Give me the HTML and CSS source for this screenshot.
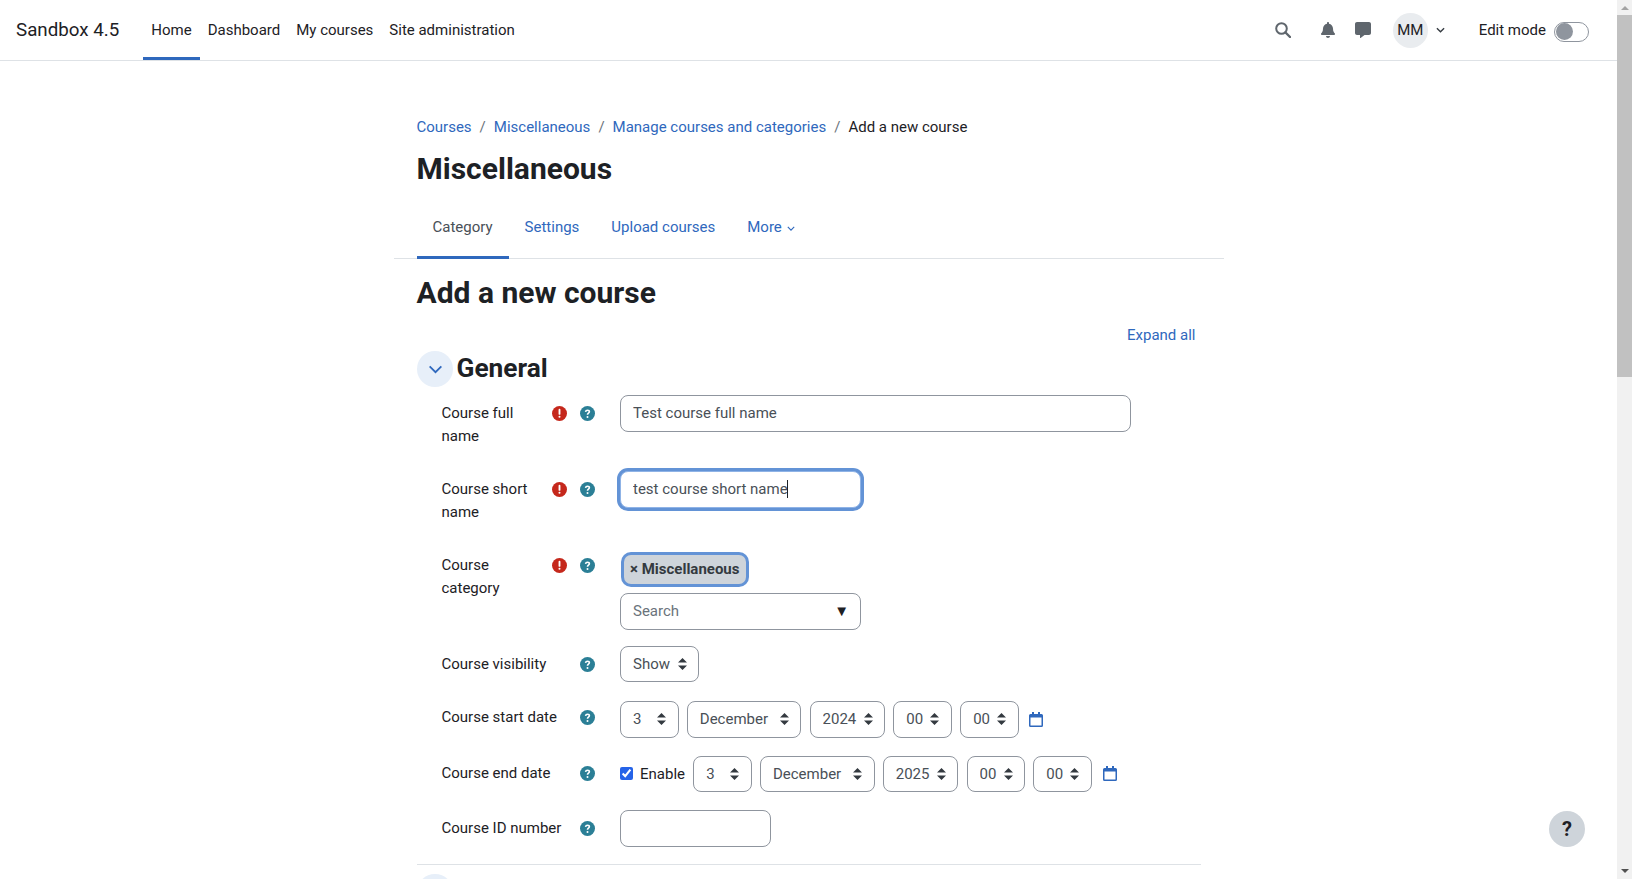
FILE: index.html
```html
<!DOCTYPE html>
<html lang="en">
<head>
    <meta charset="UTF-8">
    <meta name="viewport" content="width=device-width, initial-scale=1.0">
    <title>Add a new course</title>
    <link rel="stylesheet" href="styles.css">
</head>
<body>

    <!-- Shared icons -->
    <svg class="icon-defs" width="0" height="0">
        <symbol id="icon-required" viewBox="0 0 16 16">
            <circle cx="8" cy="8" r="8"/>
            <path d="M8 4v4.400" stroke="#fff" stroke-width="2" stroke-linecap="round"/>
            <circle cx="8" cy="11.500" r="1.100" fill="#fff"/>
        </symbol>
        <symbol id="icon-help" viewBox="0 0 16 16">
            <circle cx="8" cy="8" r="8"/>
            <path d="M5.900 6.300c.2-1.100 1-1.700 2.100-1.700 1.200 0 2 .7 2 1.600 0 1.500-2 1.500-2 3" fill="none" stroke="#fff" stroke-width="1.700"/>
            <circle cx="8" cy="11.700" r="1.050" fill="#fff"/>
        </symbol>
        <symbol id="icon-calendar" viewBox="0 0 14 15">
            <path d="M3 0h2v2h4V0h2v2h1.500A1.500 1.500 0 0 1 14 3.500v10a1.500 1.500 0 0 1-1.500 1.500h-11A1.500 1.500 0 0 1 0 13.500v-10A1.500 1.500 0 0 1 1.500 2H3zM1.500 5.500v8h11v-8z"/>
        </symbol>
    </svg>

    <div class="page">

        <!-- Navbar -->
        <nav class="navbar">
            <a class="brand" href="#">Sandbox 4.5</a>
            <ul class="nav-links">
                <li><a class="active" href="#">Home</a></li>
                <li><a href="#">Dashboard</a></li>
                <li><a href="#">My courses</a></li>
                <li><a href="#">Site administration</a></li>
            </ul>
            <div class="nav-right">
                <svg class="nav-search" viewBox="0 0 16 16" width="16" height="16">
                    <circle cx="6.500" cy="6.500" r="5.300" fill="none" stroke="#5f666d" stroke-width="2"/>
                    <path d="M10.500 10.500l4.500 4.500" stroke="#5f666d" stroke-width="2.400" stroke-linecap="round"/>
                </svg>
                <svg class="nav-bell" viewBox="0 0 448 512" width="14" height="16">
                    <path d="M224 512c35.320 0 63.970-28.650 63.970-64H160.030c0 35.350 28.650 64 63.970 64zm215.390-149.710c-19.320-20.760-55.470-51.990-55.470-154.290 0-77.700-54.480-139.900-127.940-155.160V32c0-17.670-14.320-32-31.980-32s-31.980 14.330-31.980 32v20.840C118.560 68.100 64.080 130.300 64.080 208c0 102.300-36.150 133.530-55.470 154.290-6 6.450-8.660 14.160-8.610 21.710.11 16.400 12.980 32 32.100 32h383.800c19.120 0 32-15.600 32.100-32 .05-7.550-2.610-15.270-8.610-21.710z"/>
                </svg>
                <svg class="nav-message" viewBox="0 0 512 512" width="16" height="16">
                    <path d="M448 0H64C28.700 0 0 28.700 0 64v288c0 35.300 28.700 64 64 64h96v84c0 9.800 11.200 15.500 19.100 9.700L304 416h144c35.300 0 64-28.700 64-64V64c0-35.300-28.700-64-64-64z"/>
                </svg>
                <div class="avatar">MM</div>
                <svg class="nav-caret" viewBox="0 0 10 6" width="9" height="6">
                    <path d="M1 1l4 4 4-4" fill="none" stroke="#343a40" stroke-width="1.500"/>
                </svg>
                <span class="edit-label">Edit mode</span>
                <span class="toggle"><span class="toggle-knob"></span></span>
            </div>
        </nav>

        <!-- Main Content -->
        <div class="main-content">
            <ol class="breadcrumb">
                <li><a href="#">Courses</a></li>
                <li class="sep">/</li>
                <li><a href="#">Miscellaneous</a></li>
                <li class="sep">/</li>
                <li><a href="#">Manage courses and categories</a></li>
                <li class="sep">/</li>
                <li>Add a new course</li>
            </ol>
            <h1>Miscellaneous</h1>

            <ul class="tabs">
                <li><a class="active" href="#">Category</a></li>
                <li><a href="#">Settings</a></li>
                <li><a href="#">Upload courses</a></li>
                <li>
                    <a href="#">More
                        <svg viewBox="0 0 10 6" width="8" height="5"><path d="M1 1l4 4 4-4" fill="none" stroke="currentColor" stroke-width="1.400"/></svg>
                    </a>
                </li>
            </ul>

            <h2>Add a new course</h2>
            <div class="expand-row"><a href="#">Expand all</a></div>

            <div class="section-head">
                <span class="section-toggle">
                    <svg viewBox="0 0 16 10" width="15" height="9"><path d="M1.500 1.500L8 8l6.500-6.500" fill="none" stroke="currentColor" stroke-width="2"/></svg>
                </span>
                <h3>General</h3>
            </div>

            <form class="course-form">
                <div class="form-row">
                    <div class="row-label">
                        <label>Course full name</label>
                        <svg class="icon-required"><use href="#icon-required"/></svg>
                        <svg class="icon-help"><use href="#icon-help"/></svg>
                    </div>
                    <input class="text-input input-full" type="text" value="Test course full name">
                </div>

                <div class="form-row">
                    <div class="row-label">
                        <label>Course short name</label>
                        <svg class="icon-required"><use href="#icon-required"/></svg>
                        <svg class="icon-help"><use href="#icon-help"/></svg>
                    </div>
                    <div class="focus-wrap">
                        <input class="text-input input-short focused" type="text" value="test course short name">
                        <span class="caret"></span>
                    </div>
                </div>

                <div class="form-row">
                    <div class="row-label">
                        <label>Course category</label>
                        <svg class="icon-required"><use href="#icon-required"/></svg>
                        <svg class="icon-help"><use href="#icon-help"/></svg>
                    </div>
                    <div class="category-field">
                        <span class="chip">× Miscellaneous</span>
                        <div class="search-box">
                            <span class="search-placeholder">Search</span>
                            <span class="search-arrow">▼</span>
                        </div>
                    </div>
                </div>

                <div class="form-row">
                    <div class="row-label">
                        <label>Course visibility</label>
                        <svg class="icon-help"><use href="#icon-help"/></svg>
                    </div>
                    <select class="select sel-show"><option>Show</option></select>
                </div>

                <div class="form-row">
                    <div class="row-label">
                        <label>Course start date</label>
                        <svg class="icon-help"><use href="#icon-help"/></svg>
                    </div>
                    <div class="date-group start-date">
                        <select class="select sel-small"><option>3</option></select>
                        <select class="select sel-month"><option>December</option></select>
                        <select class="select sel-year"><option>2024</option></select>
                        <select class="select sel-small"><option>00</option></select>
                        <select class="select sel-small"><option>00</option></select>
                        <svg class="calendar"><use href="#icon-calendar"/></svg>
                    </div>
                </div>

                <div class="form-row">
                    <div class="row-label">
                        <label>Course end date</label>
                        <svg class="icon-help"><use href="#icon-help"/></svg>
                    </div>
                    <div class="date-group end-date">
                        <label class="enable"><input type="checkbox" checked> Enable</label>
                        <select class="select sel-small"><option>3</option></select>
                        <select class="select sel-month"><option>December</option></select>
                        <select class="select sel-year"><option>2025</option></select>
                        <select class="select sel-small"><option>00</option></select>
                        <select class="select sel-small"><option>00</option></select>
                        <svg class="calendar"><use href="#icon-calendar"/></svg>
                    </div>
                </div>

                <div class="form-row">
                    <div class="row-label">
                        <label>Course ID number</label>
                        <svg class="icon-help"><use href="#icon-help"/></svg>
                    </div>
                    <input class="text-input input-id" type="text">
                </div>
            </form>

            <hr class="section-rule">
            <span class="section-toggle"></span>
        </div>

        <button class="help-btn" type="button">?</button>
    </div>

    <!-- Scrollbar -->
    <div class="scrollbar">
        <span class="scroll-up"></span>
        <div class="scroll-thumb"></div>
        <span class="scroll-down"></span>
    </div>

</body>
</html>
```

FILE: styles.css
```css
* {
    box-sizing: border-box;
}
html, body {
    height: 100%;
    overflow: hidden;
}
body {
    margin: 0;
    display: flex;
    font-family: Roboto, "Liberation Sans", sans-serif;
    font-size: 15px;
    line-height: 22.5px;
    color: #1d2125;
    background-color: white;
}
a {
    color: #2f68bd;
    text-decoration: none;
}
ul, ol {
    list-style: none;
    margin: 0;
    padding: 0;
}
.icon-defs {
    display: block;
    height: 0;
}
.page {
    flex-grow: 1;
    min-width: 0;
}

/* Navbar */
.navbar {
    display: flex;
    align-items: stretch;
    height: 61px;
    padding-left: 16px;
    border-bottom: 1px solid #dee2e6;
}
.brand {
    align-self: center;
    width: 127.300px;
    color: #1d2125;
    font-size: 18.75px;
    white-space: nowrap;
}
.nav-links {
    display: flex;
}
.nav-links a {
    display: flex;
    align-items: center;
    height: 60px;
    padding: 3px 8px 0;
    color: #1d2125;
    border-bottom: 3px solid transparent;
}
.nav-links a.active {
    border-bottom-color: #2f68bd;
}
.nav-right {
    display: flex;
    align-items: center;
    margin-left: auto;
    padding-right: 28px;
}
.nav-search {
    margin-right: 30px;
}
.nav-bell {
    margin-right: 20px;
    fill: #5f666d;
}
.nav-message {
    margin-right: 22px;
    fill: #5f666d;
}
.avatar {
    display: flex;
    align-items: center;
    justify-content: center;
    width: 35px;
    height: 35px;
    margin-right: 8px;
    border-radius: 50%;
    background-color: #e9ecef;
}
.nav-caret {
    margin-right: 34px;
}
.edit-label {
    margin-right: 8px;
}
.toggle {
    display: block;
    width: 35px;
    height: 20px;
    margin-top: 3px;
    border: 1px solid #8f959e;
    border-radius: 10px;
}
.toggle-knob {
    display: block;
    width: 17px;
    height: 17px;
    margin: .5px 0 0 .5px;
    border-radius: 50%;
    background-color: #8f959e;
}

/* Main Content */
.main-content {
    width: 830px;
    margin: 0 auto;
}
.breadcrumb {
    display: flex;
    gap: 8px;
    margin: 55px 0 0 23px;
}
.breadcrumb .sep {
    color: #6a737b;
}
h1, h2, h3 {
    margin: 0;
    font-weight: 700;
}
h1 {
    margin: 12px 0 0 23px;
    font-size: 30px;
    line-height: 36px;
}
.tabs {
    display: flex;
    height: 62px;
    margin-top: 10px;
    padding-left: 23px;
    border-bottom: 1px solid #dee2e6;
}
.tabs a {
    display: block;
    height: 62px;
    padding: 19px 16px 0;
}
.tabs a.active {
    color: #495057;
    border-bottom: 3px solid #2f68bd;
}
.tabs svg {
    margin-left: 1px;
    vertical-align: 1px;
}
h2 {
    margin: 16px 0 0 23px;
    font-size: 30px;
    line-height: 36px;
}
.expand-row {
    margin-top: 13px;
    padding-right: 28px;
    text-align: right;
}
.section-head {
    display: flex;
    align-items: center;
    gap: 3.500px;
    margin: 5px 0 8px 23.500px;
}
.section-toggle {
    display: flex;
    align-items: center;
    justify-content: center;
    width: 36px;
    height: 36px;
    padding-top: 1px;
    border-radius: 50%;
    color: #2f68bd;
    background-color: #e7eff9;
}
.main-content > .section-toggle {
    margin: 9px 0 0 23.500px;
}
h3 {
    margin-bottom: 2px;
    font-size: 26.250px;
    line-height: 32px;
}

/* Form */
.form-row {
    display: grid;
    grid-template-columns: 178.500px 1fr;
    align-items: start;
    margin: 0 0 16px 48px;
}
.row-label {
    display: flex;
    align-items: flex-start;
    padding-top: 7px;
    padding-bottom: 8px;
}
.row-label label {
    flex: 1;
    min-width: 0;
    padding-right: 8px;
}
.icon-required,
.icon-help {
    flex: none;
    width: 15px;
    height: 15px;
    margin-top: 4px;
}
.icon-required {
    fill: #c5281c;
    margin-right: 13px;
}
.icon-help {
    fill: #2b7f96;
    margin-right: 25.500px;
}
.text-input {
    display: block;
    height: 37px;
    padding: 0 12px 1px;
    font: inherit;
    color: #495057;
    border: 1px solid #8f959e;
    border-radius: 8px;
    outline: none;
}
.input-full {
    width: 511px;
}
.input-short {
    width: 241px;
}
.input-id {
    width: 151px;
}
.focused {
    border-color: #8fb3e6;
    box-shadow: 0 0 0 3px #6393d6;
}
.focus-wrap {
    position: relative;
}
.caret {
    position: absolute;
    left: 167px;
    top: 9px;
    width: 1px;
    height: 18px;
    background-color: #1d2125;
}
.category-field {
    display: flex;
    flex-direction: column;
    align-items: flex-start;
}
.chip {
    display: block;
    margin: 8px 0 9px 4px;
    padding: 3px 7px 3px 6px;
    font-weight: 700;
    color: #343a40;
    border-radius: 7px;
    background-color: #ced4da;
    box-shadow: 0 0 0 3px #6393d6;
}
.search-box {
    display: flex;
    align-items: center;
    justify-content: space-between;
    width: 241px;
    height: 37px;
    padding: 0 11px 0 12px;
    color: #6a737b;
    border: 1px solid #8f959e;
    border-radius: 8px;
}
.search-arrow {
    color: #1d2125;
    font-size: 15px;
}
.select {
    display: block;
    height: 36.500px;
    padding: 0 12px;
    font: inherit;
    color: #495057;
    border: 1px solid #8f959e;
    border-radius: 8px;
    outline: none;
    appearance: none;
    background: white url("data:image/svg+xml,%3Csvg xmlns='http://www.w3.org/2000/svg' width='9' height='12'%3E%3Cpath d='M4.500 0L9 4.500H0zM4.500 12L0 7.500h9z' fill='%23343a40'/%3E%3C/svg%3E") no-repeat right 11.500px center;
}
.sel-show {
    width: 79px;
}
.sel-small {
    width: 58.600px;
}
.sel-month {
    width: 114.600px;
}
.sel-year {
    width: 75.600px;
}
.date-group {
    display: flex;
    align-items: center;
    gap: 8.200px;
}
.start-date {
    margin-top: 2px;
    margin-bottom: 1px;
}
.end-date {
    margin-top: 1px;
    margin-bottom: 2px;
}
.calendar {
    width: 14px;
    height: 15px;
    margin-left: 2.500px;
    fill: #2f68bd;
}
.enable {
    display: flex;
    align-items: center;
}
.enable input {
    width: 13px;
    height: 13px;
    margin: 0 7px 0 0;
    accent-color: #2563e8;
}
.section-rule {
    margin: 0 23px 0 23.500px;
    border: none;
    border-top: 1px solid #dee2e6;
}

/* Floating help button */
.help-btn {
    position: fixed;
    left: 1549px;
    top: 811px;
    width: 36px;
    height: 36px;
    padding: 0;
    font-family: inherit;
    font-size: 20px;
    font-weight: 700;
    color: #1d2125;
    border: none;
    border-radius: 50%;
    background-color: #ced4da;
}

/* Scrollbar */
.scrollbar {
    display: flex;
    flex-direction: column;
    flex: 0 0 15px;
    background-color: #f1f1f1;
}
.scroll-up, .scroll-down {
    display: block;
    width: 0;
    height: 0;
    margin-left: 4px;
    border-left: 4px solid transparent;
    border-right: 4px solid transparent;
}
.scroll-up {
    margin-top: 6px;
    margin-bottom: 5px;
    border-bottom: 4px solid #a3a3a3;
}
.scroll-thumb {
    height: 362px;
    background-color: #c1c1c1;
}
.scroll-down {
    margin-top: auto;
    margin-bottom: 6px;
    border-top: 4px solid #505050;
}
```
